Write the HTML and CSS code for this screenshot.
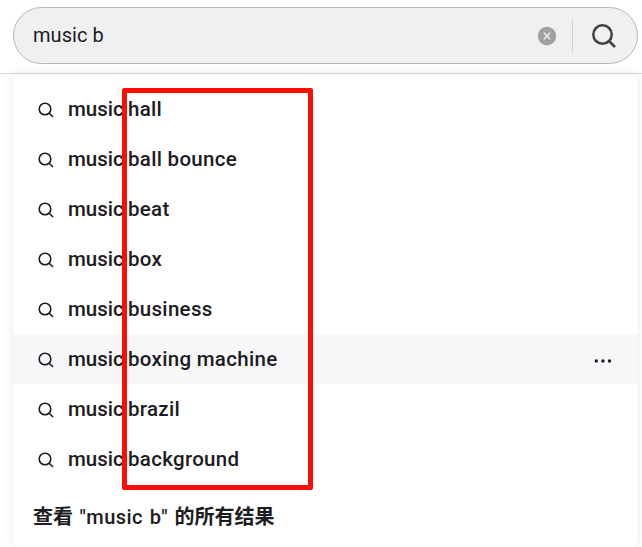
FILE: index.html
```html
<!DOCTYPE html>
<html lang="zh-CN">
<head>
<meta charset="utf-8">
<title>Search</title>
<link rel="stylesheet" href="styles.css">
</head>
<body>
<svg class="defs" aria-hidden="true"><symbol id="lens" viewBox="0 0 16 16"><circle cx="7" cy="7" r="5.8"/><path d="M11.2 11.2 15 15"/></symbol></svg>
<header class="header">
  <div class="search">
    <span class="query">music b</span>
    <svg class="clear" viewBox="0 0 20 20"><circle cx="10" cy="10" r="9.2"/><path d="m6.8 6.8 6.4 6.4m0-6.4-6.4 6.4"/></svg>
    <span class="divider"></span>
    <svg class="submit" viewBox="0 0 26 26"><circle cx="11.5" cy="11.5" r="9.2"/><path d="m18 18 6 6"/></svg>
  </div>
</header>
<main class="panel">
  <ul class="list">
    <li class="row"><svg class="icon"><use href="#lens"/></svg><span class="word">music</span><span>hall</span></li>
    <li class="row"><svg class="icon"><use href="#lens"/></svg><span class="word">music</span><span>ball bounce</span></li>
    <li class="row"><svg class="icon"><use href="#lens"/></svg><span class="word">music</span><span>beat</span></li>
    <li class="row"><svg class="icon"><use href="#lens"/></svg><span class="word">music</span><span>box</span></li>
    <li class="row"><svg class="icon"><use href="#lens"/></svg><span class="word">music</span><span>business</span></li>
    <li class="row active"><svg class="icon"><use href="#lens"/></svg><span class="word">music</span><span>boxing machine</span><svg class="more" viewBox="0 0 18 6"><circle cx="2.3" cy="3" r="1.7"/><circle cx="8.9" cy="3" r="1.7"/><circle cx="15.5" cy="3" r="1.7"/></svg></li>
    <li class="row"><svg class="icon"><use href="#lens"/></svg><span class="word">music</span><span>brazil</span></li>
    <li class="row"><svg class="icon"><use href="#lens"/></svg><span class="word">music</span><span>background</span></li>
  </ul>
  <div class="all"><b>查看</b> <span class="quoted">"music b"</span> <b>的所有结果</b></div>
  <div class="marker"></div>
</main>
</body>
</html>
```
FILE: styles.css
```css
* { box-sizing: border-box; }
body {
  margin: 0;
  height: 547px;
  overflow: hidden;
  background: #fff;
  color: #1c1c22;
  font: 500 20px/24px Roboto, "Noto Sans CJK SC", sans-serif;
}
.defs { position: absolute; width: 0; height: 0; }
svg { display: block; fill: none; stroke: currentColor; flex: none; }
.header {
  height: 74px;
  padding: 7px 4px 0 13px;
  border-bottom: 1px solid #d6d6da;
}
.search {
  display: flex;
  align-items: center;
  height: 57px;
  padding: 0 20px 0 19px;
  border: 1px solid #b8b8ba;
  border-radius: 29px;
  background: #f0f0f1;
}
.query { flex: 1; padding-bottom: 2px; font-weight: 400; letter-spacing: .05px; }
.clear { width: 20px; height: 20px; stroke: #f0f0f1; stroke-width: 1.4; }
.clear circle { fill: #a0a0a2; stroke: none; }
.divider { width: 1px; height: 34px; margin: 0 18px 0 15px; background: #d2d2d4; }
.submit { width: 26px; height: 26px; color: #414145; stroke-width: 2.5; }
.panel {
  position: relative;
  height: 474px;
  margin: 0 4px 0 13px;
  padding-top: 10px;
  border-radius: 0 8px 8px 8px;
  background: #fff;
  box-shadow: 0 0 10px rgba(0, 0, 0, .1);
}
.list { margin: 0; padding: 0; list-style: none; }
.row {
  display: flex;
  align-items: center;
  height: 50px;
  padding: 0 26px 0 25px;
  font-size: 20.5px;
  letter-spacing: .3px;
}
.active { background: #f8f8fa; }
.icon { width: 16px; height: 16px; margin: 1px 14px 0 0; stroke-width: 1.6; }
.word { width: 60px; letter-spacing: 0; }
.more { width: 18px; height: 6px; margin: 4px 0 0 auto; fill: currentColor; stroke: none; }
.all { padding: 21px 20px 0; white-space: pre; word-spacing: 1.5px; }
.all b { font-weight: 700; }
.quoted { letter-spacing: .45px; }
.marker {
  position: absolute;
  left: 109px;
  top: 14px;
  width: 191px;
  height: 402px;
  border: 5px solid #fc0d05;
  border-radius: 2px;
}
```
